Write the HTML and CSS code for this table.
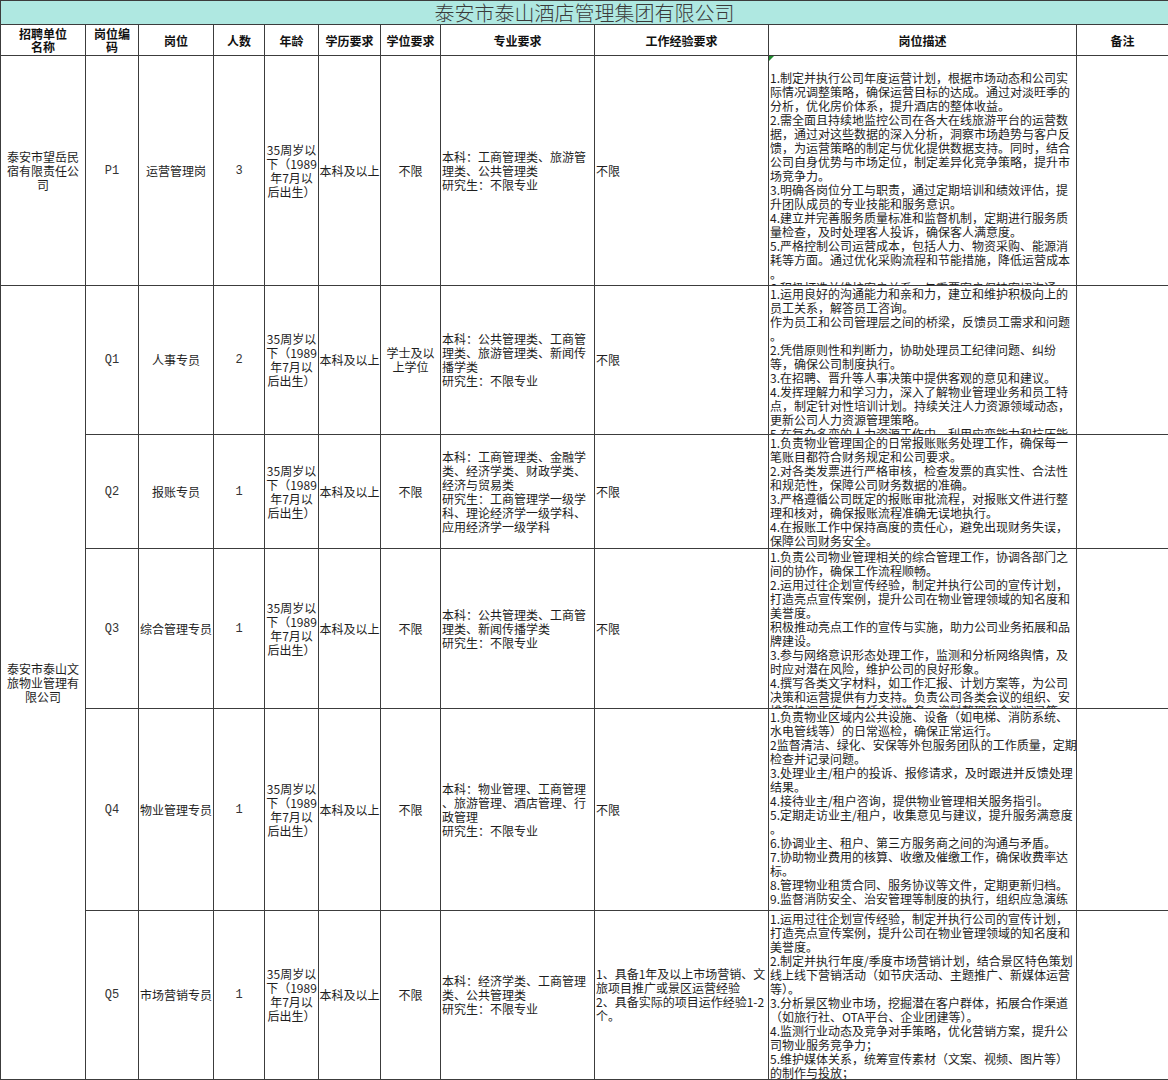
FILE: index.html
```html
<!DOCTYPE html>
<html lang="zh-CN">
<head>
<meta charset="utf-8">
<title>泰安市泰山酒店管理集团有限公司</title>
<link rel="stylesheet" href="styles.css">
</head>
<body>
<div class="sheet">
  <div class="title">泰安市泰山酒店管理集团有限公司</div>

  <div class="c hd">招聘单位<br>名称</div>
  <div class="c hd">岗位编<br>码</div>
  <div class="c hd">岗位</div>
  <div class="c hd">人数</div>
  <div class="c hd">年龄</div>
  <div class="c hd">学历要求</div>
  <div class="c hd">学位要求</div>
  <div class="c hd">专业要求</div>
  <div class="c hd">工作经验要求</div>
  <div class="c hd">岗位描述</div>
  <div class="c hd">备注</div>

  <!-- P1 -->
  <div class="c ctr">泰安市望岳民<br>宿有限责任公<br>司</div>
  <div class="c ctr code">P1</div>
  <div class="c ctr">运营管理岗</div>
  <div class="c ctr num">3</div>
  <div class="c ctr">35周岁以<br>下（1989<br>年7月以<br>后出生）</div>
  <div class="c ctr">本科及以上</div>
  <div class="c ctr">不限</div>
  <div class="c lft">本科：工商管理类、旅游管<br>理类、公共管理类<br>研究生：不限专业</div>
  <div class="c lft">不限</div>
  <div class="c top desc"><span class="flag"></span><br>1.制定并执行公司年度运营计划，根据市场动态和公司实<br>际情况调整策略，确保运营目标的达成。通过对淡旺季的<br>分析，优化房价体系，提升酒店的整体收益。<br>2.需全面且持续地监控公司在各大在线旅游平台的运营数<br>据，通过对这些数据的深入分析，洞察市场趋势与客户反<br>馈，为运营策略的制定与优化提供数据支持。同时，结合<br>公司自身优势与市场定位，制定差异化竞争策略，提升市<br>场竞争力。<br>3.明确各岗位分工与职责，通过定期培训和绩效评估，提<br>升团队成员的专业技能和服务意识。<br>4.建立并完善服务质量标准和监督机制，定期进行服务质<br>量检查，及时处理客人投诉，确保客人满意度。<br>5.严格控制公司运营成本，包括人力、物资采购、能源消<br>耗等方面。通过优化采购流程和节能措施，降低运营成本<br>。<br>6.积极打造并维护客户关系，与重要客户保持密切沟通</div>
  <div class="c"></div>

  <!-- Q1 -->
  <div class="c ctr span5">泰安市泰山文<br>旅物业管理有<br>限公司</div>
  <div class="c ctr code">Q1</div>
  <div class="c ctr">人事专员</div>
  <div class="c ctr num">2</div>
  <div class="c ctr">35周岁以<br>下（1989<br>年7月以<br>后出生）</div>
  <div class="c ctr">本科及以上</div>
  <div class="c ctr">学士及以<br>上学位</div>
  <div class="c lft">本科：公共管理类、工商管<br>理类、旅游管理类、新闻传<br>播学类<br>研究生：不限专业</div>
  <div class="c lft">不限</div>
  <div class="c top desc">1.运用良好的沟通能力和亲和力，建立和维护积极向上的<br>员工关系，解答员工咨询。<br>作为员工和公司管理层之间的桥梁，反馈员工需求和问题<br>。<br>2.凭借原则性和判断力，协助处理员工纪律问题、纠纷<br>等，确保公司制度执行。<br>3.在招聘、晋升等人事决策中提供客观的意见和建议。<br>4.发挥理解力和学习力，深入了解物业管理业务和员工特<br>点，制定针对性培训计划。持续关注人力资源领域动态，<br>更新公司人力资源管理策略。<br>5.在复杂多变的人力资源工作中，利用应变能力和抗压能</div>
  <div class="c"></div>

  <!-- Q2 -->
  <div class="c ctr code">Q2</div>
  <div class="c ctr">报账专员</div>
  <div class="c ctr num">1</div>
  <div class="c ctr">35周岁以<br>下（1989<br>年7月以<br>后出生）</div>
  <div class="c ctr">本科及以上</div>
  <div class="c ctr">不限</div>
  <div class="c lft">本科：工商管理类、金融学<br>类、经济学类、财政学类、<br>经济与贸易类<br>研究生：工商管理学一级学<br>科、理论经济学一级学科、<br>应用经济学一级学科</div>
  <div class="c lft">不限</div>
  <div class="c top desc">1.负责物业管理国企的日常报账账务处理工作，确保每一<br>笔账目都符合财务规定和公司要求。<br>2.对各类发票进行严格审核，检查发票的真实性、合法性<br>和规范性，保障公司财务数据的准确。<br>3.严格遵循公司既定的报账审批流程，对报账文件进行整<br>理和核对，确保报账流程准确无误地执行。<br>4.在报账工作中保持高度的责任心，避免出现财务失误，<br>保障公司财务安全。</div>
  <div class="c"></div>

  <!-- Q3 -->
  <div class="c ctr code">Q3</div>
  <div class="c ctr">综合管理专员</div>
  <div class="c ctr num">1</div>
  <div class="c ctr">35周岁以<br>下（1989<br>年7月以<br>后出生）</div>
  <div class="c ctr">本科及以上</div>
  <div class="c ctr">不限</div>
  <div class="c lft">本科：公共管理类、工商管<br>理类、新闻传播学类<br>研究生：不限专业</div>
  <div class="c lft">不限</div>
  <div class="c top desc">1.负责公司物业管理相关的综合管理工作，协调各部门之<br>间的协作，确保工作流程顺畅。<br>2.运用过往企划宣传经验，制定并执行公司的宣传计划，<br>打造亮点宣传案例，提升公司在物业管理领域的知名度和<br>美誉度。<br>积极推动亮点工作的宣传与实施，助力公司业务拓展和品<br>牌建设。<br>3.参与网络意识形态处理工作，监测和分析网络舆情，及<br>时应对潜在风险，维护公司的良好形象。<br>4.撰写各类文字材料，如工作汇报、计划方案等，为公司<br>决策和运营提供有力支持。负责公司各类会议的组织、安<br>排和协调工作，包括会议准备、资料整理和会议记录等。</div>
  <div class="c"></div>

  <!-- Q4 -->
  <div class="c ctr code">Q4</div>
  <div class="c ctr">物业管理专员</div>
  <div class="c ctr num">1</div>
  <div class="c ctr">35周岁以<br>下（1989<br>年7月以<br>后出生）</div>
  <div class="c ctr">本科及以上</div>
  <div class="c ctr">不限</div>
  <div class="c lft">本科：物业管理、工商管理<br>、旅游管理、酒店管理、行<br>政管理<br>研究生：不限专业</div>
  <div class="c lft">不限</div>
  <div class="c top desc">1.负责物业区域内公共设施、设备（如电梯、消防系统、<br>水电管线等）的日常巡检，确保正常运行。<br>2监督清洁、绿化、安保等外包服务团队的工作质量，定期<br>检查并记录问题。<br>3.处理业主/租户的投诉、报修请求，及时跟进并反馈处理<br>结果。<br>4.接待业主/租户咨询，提供物业管理相关服务指引。<br>5.定期走访业主/租户，收集意见与建议，提升服务满意度<br>。<br>6.协调业主、租户、第三方服务商之间的沟通与矛盾。<br>7.协助物业费用的核算、收缴及催缴工作，确保收费率达<br>标。<br>8.管理物业租赁合同、服务协议等文件，定期更新归档。<br>9.监督消防安全、治安管理等制度的执行，组织应急演练</div>
  <div class="c"></div>

  <!-- Q5 -->
  <div class="c ctr code">Q5</div>
  <div class="c ctr">市场营销专员</div>
  <div class="c ctr num">1</div>
  <div class="c ctr">35周岁以<br>下（1989<br>年7月以<br>后出生）</div>
  <div class="c ctr">本科及以上</div>
  <div class="c ctr">不限</div>
  <div class="c lft">本科：经济学类、工商管理<br>类、公共管理类<br>研究生：不限专业</div>
  <div class="c lft">1、具备1年及以上市场营销、文<br>旅项目推广或景区运营经验<br>2、具备实际的项目运作经验1-2<br>个。</div>
  <div class="c top desc">1.运用过往企划宣传经验，制定并执行公司的宣传计划，<br>打造亮点宣传案例，提升公司在物业管理领域的知名度和<br>美誉度。<br>2.制定并执行年度/季度市场营销计划，结合景区特色策划<br>线上线下营销活动（如节庆活动、主题推广、新媒体运营<br>等）。<br>3.分析景区物业市场，挖掘潜在客户群体，拓展合作渠道<br>（如旅行社、OTA平台、企业团建等）。<br>4.监测行业动态及竞争对手策略，优化营销方案，提升公<br>司物业服务竞争力；<br>5.维护媒体关系，统筹宣传素材（文案、视频、图片等）<br>的制作与投放；</div>
  <div class="c"></div>
</div>
</body>
</html>
```

FILE: styles.css
```css
html, body {
  margin: 0;
  padding: 0;
  background: #ffffff;
}

body {
  width: 1168px;
  height: 1080px;
  overflow: hidden;
  font-family: "Noto Sans CJK SC", "Noto Sans", sans-serif;
  color: #1e1e1e;
}

.sheet {
  display: grid;
  grid-template-columns: 84px 52px 74px 50px 53px 61px 59px 153px 173px 307px 91px;
  grid-template-rows: 23px 30px 229px 148px 113px 159px 201px 168px;
  gap: 1px;
  padding: 1px 0 1px 1px;
  background: #3c3c3c;
  width: 1167px;
}

.title {
  grid-column: 1 / -1;
  background: #afe8e1;
  color: #3a3a3a;
  font-size: 20px;
  font-weight: 300;
  line-height: 23px;
  text-align: center;
}

.c {
  background: #ffffff;
  overflow: hidden;
  font-size: 12px;
  line-height: 14px;
  white-space: nowrap;
  min-width: 0;
  min-height: 0;
}

.hd {
  display: flex;
  align-items: center;
  justify-content: center;
  text-align: center;
  font-weight: 700;
  line-height: 13px;
  color: #111;
}

.ctr {
  display: flex;
  align-items: center;
  justify-content: center;
  text-align: center;
}

.lft {
  display: flex;
  align-items: center;
  justify-content: flex-start;
  text-align: left;
  padding-left: 1px;
}

.top {
  padding: 1px 0 0 1px;
}

.desc {
  position: relative;
}

.code,
.num {
  font-family: "Liberation Mono", "DejaVu Sans Mono", monospace;
  font-size: 12px;
  color: #333;
}

.span5 {
  grid-row: span 5;
}

.flag {
  position: absolute;
  left: 0;
  top: 0;
  width: 0;
  height: 0;
  border-top: 5px solid #1f8a2e;
  border-right: 5px solid transparent;
}
```
